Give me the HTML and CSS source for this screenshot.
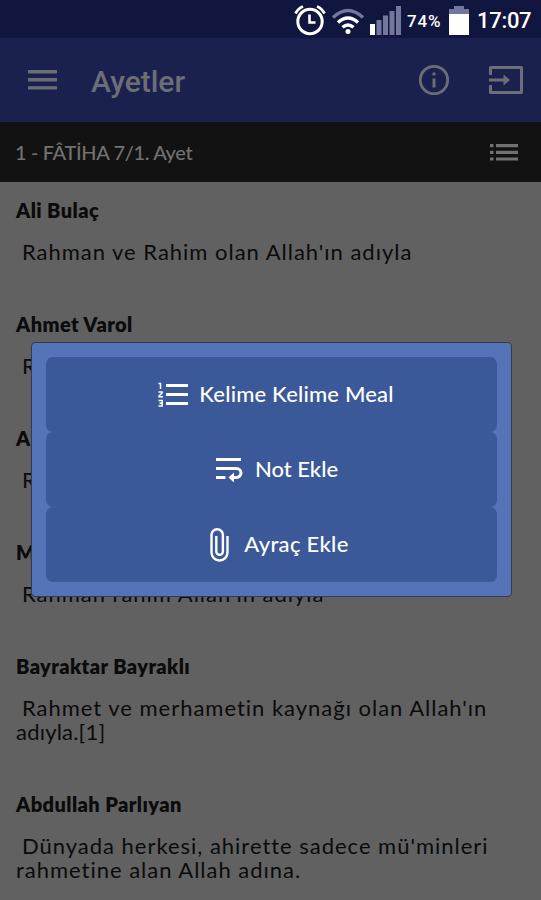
FILE: index.html
```html
<!DOCTYPE html>
<html lang="tr">
<head>
    <meta charset="UTF-8">
    <meta name="viewport" content="width=device-width, initial-scale=1.0">
    <title>Ayetler</title>
    <link rel="stylesheet" href="styles.css">
</head>
<body>
    <div class="status-bar">
        <svg class="alarm" width="32" height="32" viewBox="0 0 32 32" fill="none" stroke="#fff">
            <circle cx="16" cy="17.5" r="12.2" stroke-width="3"/>
            <path d="M15.500 10.500v8h6" stroke-width="2.600"/>
            <path d="M1.500 9.500Q4 4.500 9 2.500M30.500 9.500Q28 4.500 23 2.500" stroke-width="2.800"/>
        </svg>
        <svg class="wifi" width="34" height="28" viewBox="0 0 34 28" fill="none" stroke="#fff" stroke-width="3.400">
            <path d="M2 10.500Q17 -3.500 32 10.500" stroke="#73779b"/>
            <path d="M7 15.500Q17 6.500 27 15.500M11.500 20.300Q17 15.500 22.500 20.300"/>
            <circle cx="17" cy="24.500" r="2.500" fill="#fff" stroke="none"/>
        </svg>
        <svg class="signal" width="32" height="31" viewBox="0 0 32 31" fill="#73779b">
            <rect x="0" y="19" width="5" height="11" fill="#fff"/>
            <rect x="6.500" y="15" width="5" height="15"/>
            <rect x="13" y="10.500" width="5" height="19.500"/>
            <rect x="19.500" y="6" width="5" height="24"/>
            <rect x="26" y="1" width="5" height="29"/>
        </svg>
        <span class="percent">74%</span>
        <svg class="battery" width="20" height="31" viewBox="0 0 20 31">
            <path d="M5 1h10v3h5v7H0V4h5z" fill="#73779b"/>
            <rect x="0" y="9" width="20" height="21" fill="#fff"/>
        </svg>
        <span class="clock">17:07</span>
    </div>

    <div class="toolbar">
        <svg class="menu" width="29" height="20" viewBox="0 0 29 20" fill="#6b6e75">
            <path d="M0 0h29v3.400H0zM0 8.100h29v3.400H0zM0 16.200h29v3.400H0z"/>
        </svg>
        <h1 class="title">Ayetler</h1>
        <svg class="info" width="32" height="32" viewBox="0 0 32 32">
            <circle cx="16" cy="16" r="13.700" fill="none" stroke="#6b6e75" stroke-width="2.800"/>
            <path d="M14.500 8.500h3v3h-3zM14.500 14.500h3v9h-3z" fill="#6b6e75"/>
        </svg>
        <svg class="exit" width="34" height="28" viewBox="0 0 34 28">
            <path d="M1.500 9V1.500h31v25h-31V19" fill="none" stroke="#6b6e75" stroke-width="3" stroke-linejoin="round"/>
            <path d="M0 12.500h14.500V8.500L21 14l-6.500 5.500v-4H0z" fill="#6b6e75"/>
        </svg>
    </div>

    <div class="sura-bar">
        <span class="sura-name">1 - FÂTİHA 7/1. Ayet</span>
        <svg class="list-icon" width="28" height="17" viewBox="0 0 28 17" fill="#717171">
            <path d="M0 0h3.500v3.200H0zM6 0h22v3.200H6zM0 6.700h3.500v3.200H0zM6 6.700h22v3.200H6zM0 13.400h3.500v3.200H0zM6 13.400h22v3.200H6z"/>
        </svg>
    </div>

    <div class="verses">
        <div class="verse">
            <h3>Ali Bulaç</h3>
            <p>Rahman ve Rahim olan Allah'ın adıyla</p>
        </div>
        <div class="verse">
            <h3>Ahmet Varol</h3>
            <p>Rahman</p>
        </div>
        <div class="verse">
            <h3>A</h3>
            <p>Rahman</p>
        </div>
        <div class="verse">
            <h3>M</h3>
            <p>Rahman rahim Allah'ın adıyla</p>
        </div>
        <div class="verse">
            <h3>Bayraktar Bayraklı</h3>
            <p>Rahmet ve merhametin kaynağı olan Allah'ın<br><span class="tight">adıyla.[1]</span></p>
        </div>
        <div class="verse">
            <h3>Abdullah Parlıyan</h3>
            <p>Dünyada herkesi, ahirette sadece mü'minleri<br>rahmetine alan Allah adına.</p>
        </div>
    </div>

    <div class="dialog">
        <button class="action meal">
            <svg width="30" height="26" viewBox="0 0 30 26" fill="none" stroke="#fff">
                <path d="M8 3.500h22M8 12.500h22M8 21.500h22" stroke-width="3.200"/>
                <path d="M0.500 1.500h2v5.500M0.500 10h3.600v1L1 14v.8h4M0.500 18.500h3.700v5.600H.5M1.500 21.300h2.700" stroke-width="1.500"/>
            </svg>
            <span>Kelime Kelime Meal</span>
        </button>
        <button class="action note">
            <svg width="27" height="25" viewBox="0 0 27 25" fill="none" stroke="#fff" stroke-width="3">
                <path d="M0 2.500h25M0 11.500h20.500a4.500 4.500 0 0 1 0 9H17M0 20.500h9.500"/>
                <path d="M18 15.500v10l-5.500-5z" fill="#fff" stroke="none"/>
            </svg>
            <span>Not Ekle</span>
        </button>
        <button class="action mark">
            <svg width="19" height="34" viewBox="0 0 19 34" fill="none" stroke="#fff" stroke-width="2.400">
                <path d="M17.500 8v16.500a8 8 0 0 1-16 0V7a5.700 5.700 0 0 1 11.400 0v16.500a3.300 3.300 0 0 1-6.600 0V8"/>
            </svg>
            <span>Ayraç Ekle</span>
        </button>
    </div>
</body>
</html>
```
FILE: styles.css
```css
* {
    box-sizing: border-box;
}

body {
    position: relative;
    height: 900px;
    margin: 0;
    overflow: hidden;
    font-family: Lato, "Open Sans", sans-serif;
    background: #616161;
    color: #0b0b0b;
}

.status-bar {
    display: flex;
    align-items: center;
    height: 38px;
    padding: 2px 9px 0 0;
    justify-content: flex-end;
    background: #11163f;
    color: white;
    font-family: Roboto, sans-serif;
}

.wifi {
    margin: 2px 5px 0 5px;
}

.signal {
    margin-right: 5px;
}

.percent {
    width: 36px;
    font-size: 17px;
    font-weight: 500;
    letter-spacing: 0.9px;
    margin-right: 6px;
    padding-top: 2px;
}

.battery {
    margin-right: 8px;
}

.clock {
    width: 55px;
    font-size: 22px;
    font-weight: 500;
    letter-spacing: -0.3px;
    padding-top: 1px;
}

.toolbar {
    display: flex;
    align-items: center;
    height: 84px;
    padding: 0 18px 0 28px;
    background: #1a214f;
    color: #6b6e75;
}

.title {
    flex-grow: 1;
    margin: 3px 0 0 34px;
    font-family: Roboto, sans-serif;
    font-size: 30px;
    font-weight: 500;
}

.exit {
    margin-left: 39px;
}

.sura-bar {
    display: flex;
    align-items: center;
    justify-content: space-between;
    height: 60px;
    padding: 0 23px 0 15px;
    background: #121212;
    color: #717171;
}

.sura-name {
    font-size: 20px;
    font-weight: 500;
    letter-spacing: -0.35px;
}

.verses {
    padding: 16px 16px 0;
}

.verse {
    padding-bottom: 48px;
}

.verse h3 {
    margin: 0 0 18px;
    font-size: 20px;
    line-height: 24px;
    font-weight: 800;
    letter-spacing: 0.42px;
}

.verse p {
    margin: 0;
    font-size: 22px;
    line-height: 24px;
    letter-spacing: 0.98px;
    text-indent: 6px;
    white-space: nowrap;
}

.verse .tight {
    letter-spacing: 0.2px;
}

.dialog {
    position: absolute;
    left: 31px;
    top: 342px;
    width: 481px;
    height: 255px;
    padding: 14px;
    background: #5574b8;
    border: 1px solid #303a50;
    border-radius: 4px;
}

.action {
    display: flex;
    align-items: center;
    justify-content: center;
    width: 100%;
    height: 75px;
    padding: 0;
    border: none;
    border-radius: 7px;
    background: #3b5998;
    color: white;
    font-family: inherit;
    font-size: 22px;
    font-weight: 500;
}

.action span {
    margin-top: -2px;
}

.meal {
    gap: 11px;
    padding-left: 9px;
    letter-spacing: 0.18px;
}

.note {
    gap: 12px;
    padding-left: 11px;
}

.mark {
    gap: 15px;
    padding-left: 16px;
    letter-spacing: 0.3px;
}
```
